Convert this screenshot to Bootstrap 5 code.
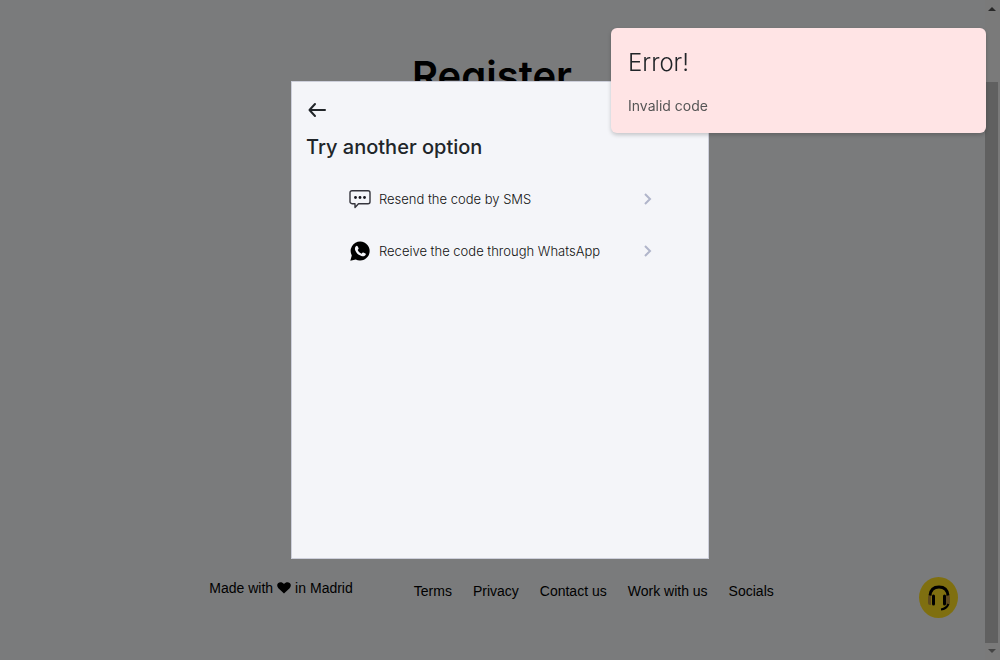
<!DOCTYPE html>
<html lang="en">
<head>
<meta charset="utf-8">
<meta name="viewport" content="width=device-width, initial-scale=1">
<title>Register</title>
<link href="https://cdn.jsdelivr.net/npm/bootstrap@5.3.0/dist/css/bootstrap.min.css" rel="stylesheet">
<style>
  body { background: #f4f6f9; font-family: Inter, "Liberation Sans", sans-serif; color: #212529; }
  .page-title { font-size: 40px; line-height: 48px; font-weight: 600; color: #000; padding-top: 52px; }
  .site-footer { font-family: "Liberation Sans", Arial, sans-serif; font-size: 14px; line-height: 20px; color: #000; padding: 0 33px 56px 16px; gap: 61px; }
  .site-footer a { color: #000; text-decoration: none; }
  .made-in { gap: 4px; margin-bottom: 6px; }
  .footer-links { gap: 21px; }
  .support-btn { width: 39px; height: 41px; right: 42px; bottom: 42px; background: #ffdf20; }
  .shade { background: rgba(0, 0, 0, .5); z-index: 1040; }
  .scroll-rail { width: 15px; background: #f4f4f4; z-index: 1030; padding: 7px 2px 6px 0; }
  .scroll-thumb { background: #c1c1c1; margin-top: 70px; margin-bottom: 6px; }
  .option-dialog { max-width: 418px; margin-top: 81px; }
  .option-dialog .modal-content { min-height: 478px; background: #f4f5f9; border: 1px solid #cdcfdb; border-radius: 0; padding: 14px; }
  .back-btn { width: 20px; height: 28px; margin-left: 1px; }
  .option-title { font-size: 20px; line-height: 24px; font-weight: 500; margin: 11px 0 25px; }
  .option-list { padding: 0 41px; gap: 22px; }
  .option-row { font-size: 13px; line-height: 20px; height: 30px; font-weight: 300; color: #111; gap: 8px; padding: 0 0 0 2px; }
  .error-toast { width: 375px; max-width: 100%; top: 28px; right: 14px; z-index: 1080; background: #ffe4e5; border-radius: 6px; padding: 17px; box-shadow: 0 2px 4px rgba(0, 0, 0, .2); }
  .error-title { font-size: 24px; line-height: 36px; font-weight: 300; margin-bottom: 14px; color: #212529; }
  .error-text { font-size: 14px; line-height: 21px; color: #555; }
</style>
</head>
<body>
<div class="d-flex flex-column min-vh-100">
  <main class="flex-grow-1">
    <h1 class="page-title text-center m-0 pe-3">Register</h1>
  </main>
  <footer class="site-footer d-flex justify-content-center align-items-center">
    <div class="made-in d-flex align-items-center">
      <span>Made with</span>
      <svg width="14" height="12" viewBox="0 0 14 12" aria-label="love"><path d="M7 11.500 1.400 6.200C-.2 4.500-.2 2 1.300.9 3.100-.4 5.500.1 7 2 8.500.1 10.900-.4 12.700.9 14.200 2 14.200 4.500 12.600 6.200Z"/></svg>
      <span>in</span>
      <span>Madrid</span>
    </div>
    <nav class="footer-links d-flex" aria-label="Footer">
      <a href="#">Terms</a>
      <a href="#">Privacy</a>
      <a href="#">Contact us</a>
      <a href="#">Work with us</a>
      <a href="#">Socials</a>
    </nav>
  </footer>
</div>

<button type="button" class="support-btn btn rounded-circle border-0 p-0 position-fixed d-flex align-items-center justify-content-center" aria-label="Support">
  <svg width="24" height="26" viewBox="0 0 24 26" fill="none">
    <path d="M4 10v10H3a2 2 0 0 1-2-2v-6a2 2 0 0 1 2-2zM19 10h2a2 2 0 0 1 2 2v6a2 2 0 0 1-2 2h-2z" fill="#bd923c"/>
    <path d="M3 10.500C3.500 5 6.800 2 12 2s8.500 3 9 8.500" stroke="#000" stroke-width="3"/>
    <rect x="5" y="9.500" width="3" height="11" rx="1.500" fill="#000"/>
    <rect x="16" y="9.500" width="3" height="11" rx="1.500" fill="#000"/>
    <path d="M21.500 19c-1.500 3.500-4 5-7.500 5.500" stroke="#000" stroke-width="2"/>
  </svg>
</button>

<div class="scroll-rail position-fixed top-0 end-0 h-100 d-flex flex-column align-items-stretch" aria-hidden="true">
  <svg class="align-self-center" width="8" height="5" viewBox="0 0 8 5"><path d="M0 4 4 0l4 4z" fill="#505050"/></svg>
  <div class="scroll-thumb flex-grow-1"></div>
  <svg class="align-self-center" width="8" height="5" viewBox="0 0 8 5"><path d="M0 0h8L4 4z" fill="#8a8a8a"/></svg>
</div>

<div class="shade position-fixed top-0 start-0 w-100 h-100"></div>

<div class="modal d-block" tabindex="-1" role="dialog" aria-labelledby="optionTitle">
  <div class="modal-dialog option-dialog mx-auto mb-0">
    <div class="modal-content">
      <button type="button" class="back-btn btn border-0 p-0 d-flex align-items-center" aria-label="Back">
        <svg width="20" height="16" viewBox="0 0 20 16" fill="none" stroke="#212529" stroke-width="2" stroke-linecap="round" stroke-linejoin="round"><path d="M18 8H3M8 2 2.500 8 8 14"/></svg>
      </button>
      <h2 class="option-title" id="optionTitle">Try another option</h2>
      <div class="option-list d-flex flex-column">
        <button type="button" class="option-row btn border-0 d-flex align-items-center text-start">
          <svg width="22" height="20" viewBox="0 0 22 20" fill="none"><path d="M3 1.700h16a2 2 0 0 1 2 2v9a2 2 0 0 1-2 2H9.500L6 18.500v-3.800H3a2 2 0 0 1-2-2v-9a2 2 0 0 1 2-2z" stroke="#35353d" stroke-width="1.400" stroke-linejoin="round"/><g fill="#15151c"><circle cx="6.500" cy="8.500" r="1.400"/><circle cx="11" cy="8.500" r="1.400"/><circle cx="15.500" cy="8.500" r="1.400"/></g></svg>
          <span class="flex-grow-1">Resend the code by SMS</span>
          <svg width="10" height="12" viewBox="0 0 10 12" fill="none" stroke="#b0b5ca" stroke-width="2"><path d="m2 1 5 5-5 5"/></svg>
        </button>
        <button type="button" class="option-row btn border-0 d-flex align-items-center text-start">
          <svg width="22" height="20" viewBox="0 0 22 20"><path d="M11.200.5a9.500 9.500 0 1 1-4.500 17.900L1.300 19.700l1.500-5.100A9.500 9.500 0 0 1 11.200.5z"/><path d="M6.900 5.200c.6-.7 1.300-.7 1.700 0l1 2.100c.2.500-.1.900-.9 1.700.8 1.800 2.100 2.900 3.900 3.700.8-1.100 1.200-1.500 1.700-1.200l2.100 1c.6.300.5.900.1 1.600-.9 1.300-2.500 1.500-4.200.9C9 13.800 7.100 11.700 6.200 9.200c-.5-1.500-.3-3 .7-4z" fill="#f4f5fa"/></svg>
          <span class="flex-grow-1">Receive the code through WhatsApp</span>
          <svg width="10" height="12" viewBox="0 0 10 12" fill="none" stroke="#b0b5ca" stroke-width="2"><path d="m2 1 5 5-5 5"/></svg>
        </button>
      </div>
    </div>
  </div>
</div>

<div class="error-toast position-fixed" role="alert">
  <h3 class="error-title">Error!</h3>
  <p class="error-text m-0">Invalid code</p>
</div>
<script src="https://cdn.jsdelivr.net/npm/bootstrap@5.3.0/dist/js/bootstrap.bundle.min.js"></script>
</body>
</html>
